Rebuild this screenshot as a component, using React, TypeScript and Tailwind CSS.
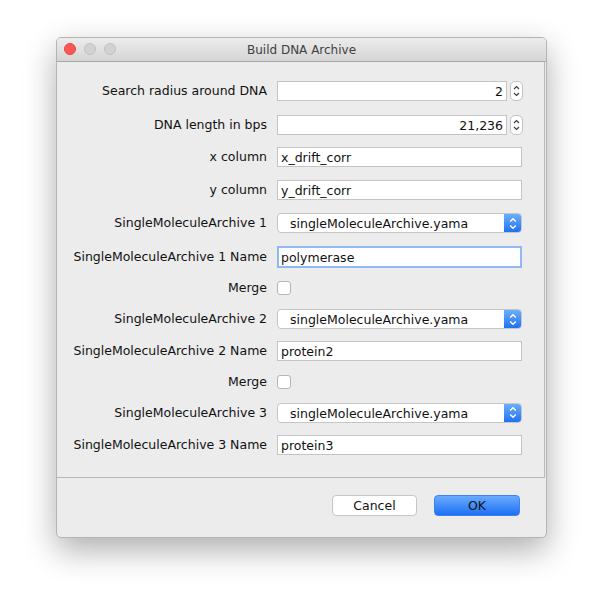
import React from "react";

const font = { fontFamily: '"DejaVu Sans", Verdana, sans-serif' };

const Spinner: React.FC = () => (
  <div className="w-[13px] h-[20px] rounded-[5px] border border-[#c2c2c2] bg-white flex items-center justify-center">
    <svg width="7" height="14" viewBox="0 0 7 14" fill="none" stroke="#3a3a3a" strokeWidth="1.1">
      <path d="M1 5 L3.5 2.5 L6 5" />
      <path d="M1 9 L3.5 11.5 L6 9" />
    </svg>
  </div>
);

const NumberField: React.FC<{ value: string }> = ({ value }) => (
  <div className="flex items-center gap-[3px]">
    <div className="w-[230px] h-[20px] bg-white border border-[#c4c4c4] text-right pr-[3px] leading-[19px]">
      {value}
    </div>
    <Spinner />
  </div>
);

const TextField: React.FC<{ value: string; focused?: boolean }> = ({ value, focused }) => (
  <div
    className={
      focused
        ? "w-[245px] h-[22px] -my-[1px] bg-white border-2 border-[#91b8f2] pl-[2px] leading-[19px]"
        : "w-[245px] h-[20px] bg-white border border-[#c4c4c4] pl-[3px] leading-[19px]"
    }
  >
    {value}
  </div>
);

const Dropdown: React.FC<{ value: string }> = ({ value }) => (
  <div className="w-[245px] h-[20px] flex rounded-[4px] border border-[#c6c6c6] bg-white overflow-hidden">
    <div className="flex-1 pl-[12px] leading-[19px]">{value}</div>
    <div className="w-[17px] h-full bg-gradient-to-b from-[#6aaefc] to-[#1f71f3] flex items-center justify-center">
      <svg width="8" height="13" viewBox="0 0 8 13" fill="none" stroke="#ffffff" strokeWidth="1.4">
        <path d="M1.2 4.6 L4 1.8 L6.8 4.6" />
        <path d="M1.2 8.4 L4 11.2 L6.8 8.4" />
      </svg>
    </div>
  </div>
);

const Checkbox: React.FC = () => (
  <div className="w-[14px] h-[14px] rounded-[3px] border border-[#b6b6b6] bg-white" />
);

type Row = { label: string; h: string; field: React.ReactNode };

const rows: Row[] = [
  { label: "Search radius around DNA", h: "h-[34px]", field: <NumberField value="2" /> },
  { label: "DNA length in bps", h: "h-[33px]", field: <NumberField value="21,236" /> },
  { label: "x column", h: "h-[32px]", field: <TextField value="x_drift_corr" /> },
  { label: "y column", h: "h-[33px]", field: <TextField value="y_drift_corr" /> },
  { label: "SingleMoleculeArchive 1", h: "h-[34px]", field: <Dropdown value="singleMoleculeArchive.yama" /> },
  { label: "SingleMoleculeArchive 1 Name", h: "h-[33px]", field: <TextField value="polymerase" focused /> },
  { label: "Merge", h: "h-[30px]", field: <Checkbox /> },
  { label: "SingleMoleculeArchive 2", h: "h-[32px]", field: <Dropdown value="singleMoleculeArchive.yama" /> },
  { label: "SingleMoleculeArchive 2 Name", h: "h-[31px]", field: <TextField value="protein2" /> },
  { label: "Merge", h: "h-[31px]", field: <Checkbox /> },
  { label: "SingleMoleculeArchive 3", h: "h-[31px]", field: <Dropdown value="singleMoleculeArchive.yama" /> },
  { label: "SingleMoleculeArchive 3 Name", h: "h-[34px]", field: <TextField value="protein3" /> },
];

const App: React.FC = () => {
  return (
    <div className="w-[603px] h-[612px] bg-white pt-[37px] pl-[56px] text-[12.5px] text-[#111]" style={font}>
      <div className="w-[491px] h-[501px] rounded-[5px] border border-[#b4b4b4] bg-[#ececec] overflow-hidden flex flex-col shadow-[0_12px_32px_rgba(0,0,0,0.32)]">
        {/* title bar */}
        <div className="relative h-[24px] shrink-0 flex items-center justify-center border-b border-[#a9a9a9] bg-gradient-to-b from-[#ececec] to-[#d5d5d5]">
          <div className="absolute left-[7px] top-[5px] flex gap-[8px]">
            <div className="w-[12px] h-[12px] rounded-full bg-[#fc5753] border border-[#df4744]" />
            <div className="w-[12px] h-[12px] rounded-full bg-[#d2d2d2] border border-[#c0c0c0]" />
            <div className="w-[12px] h-[12px] rounded-full bg-[#d2d2d2] border border-[#c0c0c0]" />
          </div>
          <span className="text-[12px] text-[#404040]">Build DNA Archive</span>
        </div>

        {/* form panel */}
        <div className="h-[416px] shrink-0 mr-[1px] border-r border-b border-[#b8b8b8] pt-[12px]">
          {rows.map((row, i) => (
            <div key={i} className={`${row.h} flex items-center`}>
              <div className="w-[210px] text-right pt-[1px]">{row.label}</div>
              <div className="ml-[10px]">{row.field}</div>
            </div>
          ))}
        </div>

        {/* buttons */}
        <div className="flex-1 flex justify-end items-start pt-[17px] pr-[26px] gap-[17px]">
          <button className="w-[85px] h-[21px] rounded-[4px] bg-white border border-[#c6c6c6] text-[#111] leading-[19px]">
            Cancel
          </button>
          <button className="w-[86px] h-[21px] rounded-[4px] bg-gradient-to-b from-[#69abfd] to-[#1b6ef6] border border-[#3b83f0] text-[#111] leading-[19px]">
            OK
          </button>
        </div>
      </div>
    </div>
  );
};

export default App;
